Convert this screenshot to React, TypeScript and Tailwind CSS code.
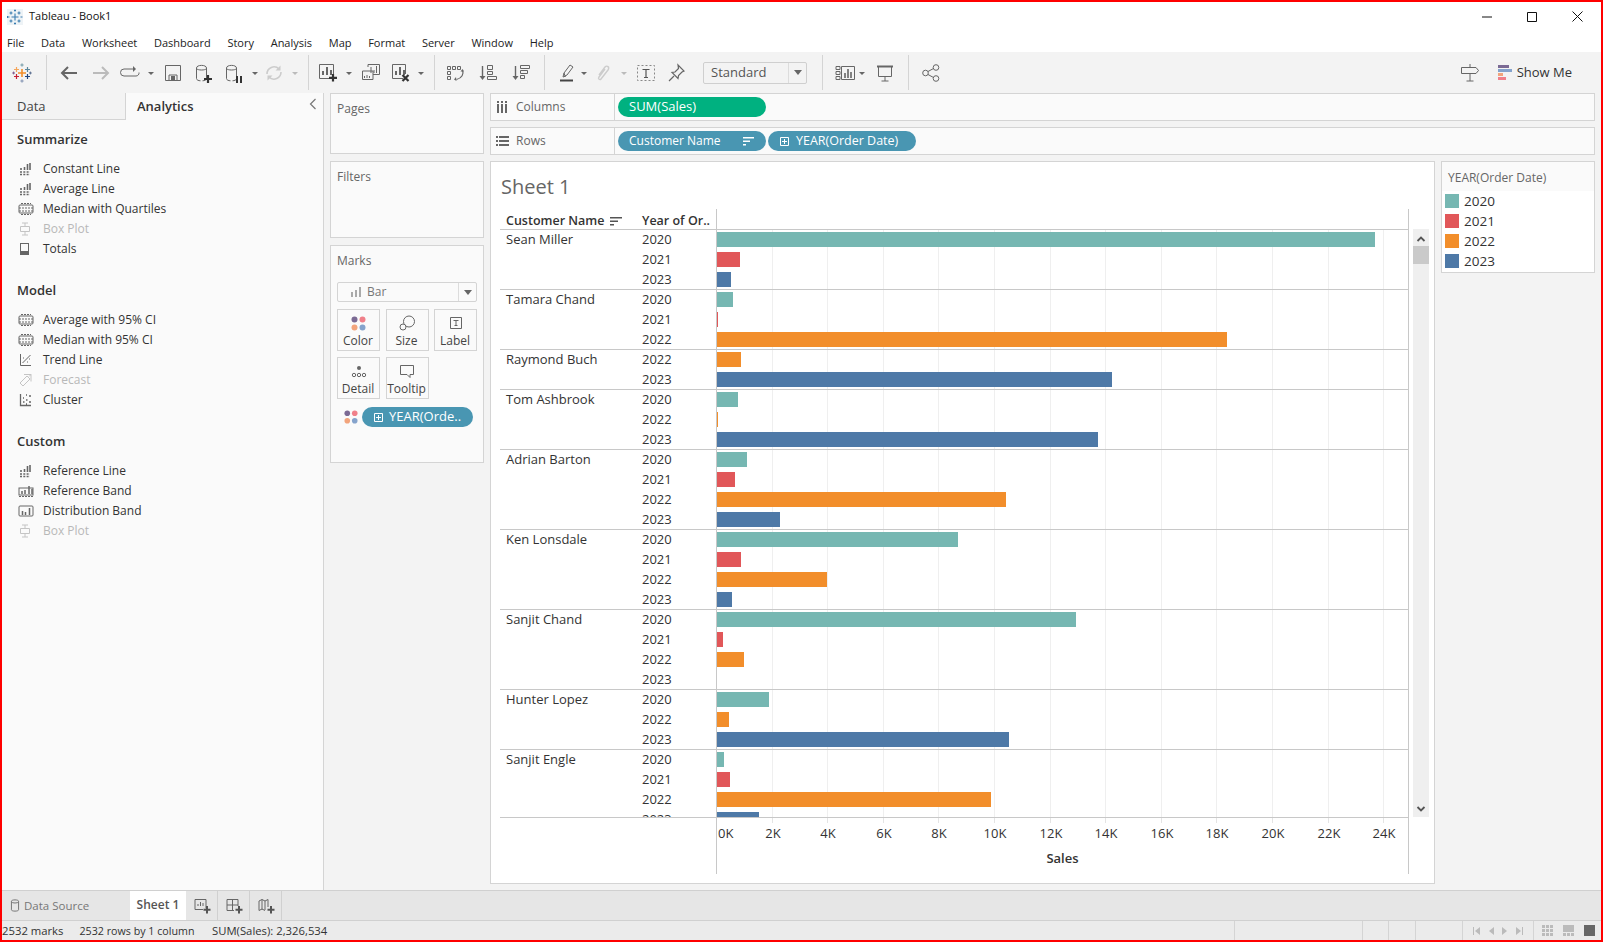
import React from "react";

const groups: { name: string; rows: [string, number][] }[] = [
  { name: "Sean Miller", rows: [["2020", 658], ["2021", 23], ["2023", 14]] },
  { name: "Tamara Chand", rows: [["2020", 16], ["2021", 1], ["2022", 510]] },
  { name: "Raymond Buch", rows: [["2022", 24], ["2023", 395]] },
  { name: "Tom Ashbrook", rows: [["2020", 21], ["2022", 1], ["2023", 381]] },
  { name: "Adrian Barton", rows: [["2020", 30], ["2021", 18], ["2022", 289], ["2023", 63]] },
  { name: "Ken Lonsdale", rows: [["2020", 241], ["2021", 24], ["2022", 110], ["2023", 15]] },
  { name: "Sanjit Chand", rows: [["2020", 359], ["2021", 6], ["2022", 27], ["2023", 0]] },
  { name: "Hunter Lopez", rows: [["2020", 52], ["2022", 12], ["2023", 292]] },
  { name: "Sanjit Engle", rows: [["2020", 7], ["2021", 13], ["2022", 274], ["2023", 42]] },
];

const yearColor: Record<string, string> = {
  "2020": "bg-[#76b7b2]",
  "2021": "bg-[#e15759]",
  "2022": "bg-[#f28e2b]",
  "2023": "bg-[#4e79a7]",
};

const ticks = [2, 4, 6, 8, 10, 12, 14, 16, 18, 20, 22, 24];
const tickX = (k: number) => Math.round(k * 27.8);

function Ico({ w = 20, h = 20, className = "", children }: { w?: number; h?: number; className?: string; children: React.ReactNode }) {
  return (
    <svg width={w} height={h} viewBox={`0 0 ${w} ${h}`} fill="none" stroke="#666" strokeWidth="1" className={"shrink-0 " + className}>
      {children}
    </svg>
  );
}

function Caret({ className = "", light }: { className?: string; light?: boolean }) {
  return (
    <svg width="6" height="20" viewBox="0 0 6 20" className={"shrink-0 " + className}>
      <path d="M0 9h6l-3 3z" fill={light ? "#bbb" : "#666"} />
    </svg>
  );
}

function Sep({ className = "" }: { className?: string }) {
  return <div className={"w-px h-[35px] bg-[#d4d4d4] shrink-0 " + className} />;
}

function TableauLogo({ size = 20 }: { size?: number }) {
  const cross = (x: number, y: number, r: number, c: string, sw = 1) => (
    <path d={`M${x - r} ${y}h${r * 2}M${x} ${y - r}v${r * 2}`} stroke={c} strokeWidth={sw} />
  );
  return (
    <svg width={size} height={size} viewBox="0 0 20 20" fill="none" className="shrink-0">
      {cross(10, 10, 4, "#f28e2b", 1.6)}
      {cross(4.5, 6.5, 2.5, "#f5a65b", 1.2)}
      {cross(15.5, 6.5, 2.5, "#5b879b", 1.2)}
      {cross(4.5, 13.5, 2.5, "#c72035", 1.2)}
      {cross(15.5, 13.5, 2.5, "#1f447e", 1.2)}
      {cross(10, 2, 1.6, "#7199a6", 1)}
      {cross(10, 18, 1.6, "#7e8fb0", 1)}
      {cross(1.6, 10, 1.4, "#7e5b8c", 1)}
      {cross(18.4, 10, 1.4, "#5b6f91", 1)}
    </svg>
  );
}

function AppIcon() {
  return (
    <svg width="16" height="16" viewBox="0 0 16 16" fill="none" stroke="#3a7cb0" strokeWidth="1.100" className="shrink-0">
      <rect x="0" y="0" width="16" height="16" fill="#eef3f6" stroke="none" />
      <path d="M8 4.500v7M4.500 8h7M4 2.500v3M2.500 4h3M12 2.500v3M10.500 4h3M4 10.500v3M2.500 12h3M12 10.500v3M10.500 12h3M8 .5v2M7 1.500h2M8 13.500v2M7 14.500h2M.5 7v2M13.500 8h2M.5 8h2" />
    </svg>
  );
}

function DbIcon({ stroke = "#666" }: { stroke?: string }) {
  return <path d="M2.500 5c0-3.500 10-3.500 10 0v10.500c0 1.500-2 2.200-4 2.300M2.500 5v10.500c0 1.500 2 2.200 4 2.300M2.500 5.500c1 2 9 2 10 0" stroke={stroke} />;
}

function BarsGlyph({ x = 4, y = 5 }: { x?: number; y?: number }) {
  return (
    <g fill="#666" stroke="none">
      <rect x={x} y={y + 5} width="2" height="4" />
      <rect x={x + 4} y={y + 1} width="2" height="8" />
      <rect x={x + 8} y={y + 4} width="2" height="5" />
    </g>
  );
}

function Toolbar() {
  return (
    <div className="h-[41px] bg-[#f3f3f3] flex items-center shrink-0">
      <div className="ml-[10px]"><TableauLogo /></div>
      <Sep className="ml-[14px]" />
      <Ico w={20} className="ml-[12px]"><path d="M18 10H3M9 4l-6 6 6 6" stroke="#666" strokeWidth="2" /></Ico>
      <Ico w={20} className="ml-[12px]"><path d="M2 10h15M11 4l6 6-6 6" stroke="#bbb" strokeWidth="2" /></Ico>
      <Ico w={20} className="ml-[9px]">
        <path d="M13 6H4a3 3 0 0 0 0 7h12a3 3 0 0 0 3-3.500" />
        <path d="M13 3l3 3-3 3z" fill="#666" stroke="none" />
      </Ico>
      <Caret className="ml-[8px]" />
      <Ico w={20} className="ml-[9px]">
        <path d="M2.500 2.500h15v15h-15zM6 17v-5h8v5" />
        <rect x="8" y="13" width="4" height="4" fill="#666" stroke="none" />
      </Ico>
      <Ico w={20} className="ml-[11px]">
        <DbIcon />
        <path d="M14 12v8M10 16h8" stroke="#333" strokeWidth="2.200" />
      </Ico>
      <Ico w={20} className="ml-[10px]">
        <DbIcon />
        <path d="M13 13v7M17 13v7" stroke="#333" strokeWidth="2" />
      </Ico>
      <Caret className="ml-[8px]" />
      <Ico w={20} className="ml-[6px]">
        <path d="M3 11a7 7 0 0 1 12-5M17 9a7 7 0 0 1-12 5" stroke="#ccc" strokeWidth="1.600" />
        <path d="M16.500 2.500v5h-5zM3.500 17.500v-5h5z" fill="#ccc" stroke="none" />
      </Ico>
      <Caret className="ml-[8px]" light />
      <Sep className="ml-[10px]" />
      <Ico w={20} className="ml-[9px]">
        <path d="M13 15.500H1.500v-14h14V11" />
        <BarsGlyph x={4} y={3} />
        <path d="M15 11v7.500M11 14.800h8" stroke="#333" strokeWidth="2.200" />
      </Ico>
      <Caret className="ml-[8px]" />
      <Ico w={20} className="ml-[9px]">
        <path d="M7 4V1.500h11.500v10H12M1.500 8H12v8.500H1.500z" />
        <path d="M10 4v6M13 7v3M15.500 3v7M3.500 13v2M6 12v3M8.500 13v2" stroke="#666" />
      </Ico>
      <Ico w={20} className="ml-[10px]">
        <path d="M12 15.500H1.500v-14h13V11" />
        <BarsGlyph x={4} y={3} />
        <path d="M11.500 12l6 6M17.500 12l-6 6" stroke="#333" strokeWidth="2.200" />
      </Ico>
      <Caret className="ml-[7px]" />
      <Sep className="ml-[10px]" />
      <Ico w={20} className="ml-[11px]">
        <path d="M1.500 3.500h3v3h-3zM6.500 3.500h3v3h-3zM11.500 3.500h3v3h-3zM1.500 8.500h3v3h-3zM1.500 13.500h3v3h-3z" />
        <path d="M16.500 7c1.500 4-.5 8-6 9.500" strokeWidth="1.200" />
        <path d="M10 14l-2 2.500 2.500 1.500zM16.500 6l-2 2.500h3.500z" fill="#666" stroke="none" />
      </Ico>
      <Ico w={20} className="ml-[12px]">
        <path d="M4.500 3v12" strokeWidth="1.400" />
        <path d="M1.500 13h6l-3 4z" fill="#666" stroke="none" />
        <path d="M9.500 2.500h5v4h-5zM9.500 8.500h5v3h-5zM9.500 13.500h9v3h-9z" />
      </Ico>
      <Ico w={20} className="ml-[13px]">
        <path d="M4.500 3v12" strokeWidth="1.400" />
        <path d="M1.500 13h6l-3 4z" fill="#666" stroke="none" />
        <path d="M9.500 2.500h9v3h-9zM9.500 7.500h7v3h-7zM9.500 12.500h4v3h-4z" />
      </Ico>
      <Sep className="ml-[13px]" />
      <Ico w={20} className="ml-[12px]">
        <path d="M8 13l-1-3 6-8 3 2-6 8zM7 10l-1 4 3-1" />
        <path d="M3 17.500h13" stroke="#444" strokeWidth="2" />
      </Ico>
      <Caret className="ml-[4px]" />
      <Ico w={20} className="ml-[7px]">
        <path d="M5 12l6-8c2-2 5 0 3 3l-7 9c-1 1.500-3.500 0-2-2l6-8" stroke="#ccc" strokeWidth="1.400" />
      </Ico>
      <Caret className="ml-[7px]" light />
      <Ico w={20} className="ml-[9px]">
        <path d="M1.500 2.500h17v15h-17z" strokeDasharray="2 2" stroke="#888" />
        <path d="M6.500 6.500h7M10 6.500v8M8 14.500h4" stroke="#555" strokeWidth="1.200" />
      </Ico>
      <Ico w={20} className="ml-[10px]">
        <path d="M12 2l6 6-2 1-3.500 3.500-.5 3-6-6 3-.5L12.500 5.500zM8 13l-5 5" strokeWidth="1.200" />
      </Ico>
      <div className="ml-[17px] w-[104px] h-[22px] border border-[#cfcfcf] rounded-[2px] flex items-center text-[13px] text-[#555] shrink-0">
        <span className="flex-1 pl-[7px]">Standard</span>
        <div className="w-[18px] h-full border-l border-[#dcdcdc] flex items-center justify-center">
          <svg width="8" height="5" viewBox="0 0 8 5"><path d="M0 0h8L4 5z" fill="#666" /></svg>
        </div>
      </div>
      <Sep className="ml-[15px]" />
      <Ico w={20} className="ml-[12px]">
        <path d="M1 3.500h4v3H1zM1 8.500h4v3H1zM1 13.500h4v3H1zM6.500 3.500h13v13h-13z" />
        <path d="M10 10v5M13 6v9M16 9v6" strokeWidth="1.600" />
      </Ico>
      <Caret className="ml-[4px]" />
      <Ico w={20} className="ml-[10px]">
        <path d="M2 3.500h16" strokeWidth="2" />
        <path d="M3.500 4v9.500h13V4M10 13.500v4.500M6.500 18h7" />
      </Ico>
      <Sep className="ml-[13px]" />
      <Ico w={20} className="ml-[12px]">
        <circle cx="15" cy="4.500" r="2.800" />
        <circle cx="15" cy="15.500" r="2.800" />
        <circle cx="4.500" cy="10" r="2.800" />
        <path d="M7 8.500l5.500-3M7 11.500l5.500 3" />
      </Ico>
      <div className="ml-auto flex items-center mr-[29px]">
        <Ico w={20}>
          <path d="M1.500 4.500H16l2.500 3-2.500 3H1.500zM10 1v3.500M10 10.500V18M6.500 18h7" />
        </Ico>
        <svg width="15" height="16" viewBox="0 0 15 16" className="ml-[18px] shrink-0">
          <rect x="0" y="0" width="11" height="3" fill="#7b6a94" />
          <rect x="0" y="4" width="14" height="3" fill="#85a3cc" />
          <rect x="0" y="8" width="5" height="3" fill="#f2a47c" />
          <rect x="0" y="12" width="8" height="3" fill="#f0808a" />
        </svg>
        <span className="ml-[4px] text-[13px] text-[#333]">Show Me</span>
      </div>
    </div>
  );
}

function RowIcon({ kind, off }: { kind: string; off?: boolean }) {
  const c = off ? "#c4c4c4" : "#666";
  return (
    <svg width="16" height="14" viewBox="0 0 16 14" fill="none" stroke={c} className="shrink-0">
      {kind === "line" && (
        <>
          <path d="M3 6v2M6.500 5v3M9.500 2v6M12 1v7" strokeWidth="1.600" />
          <path d="M2 10h10M2 12.500h10" strokeDasharray="2 1.300" strokeWidth="1.300" />
        </>
      )}
      {kind === "band" && (
        <>
          <rect x="1" y="3" width="14" height="8" rx="1" />
          <path d="M1 6h14M1 9h14" strokeDasharray="2 1" />
          <path d="M3 1.500h10M3 12.500h10" strokeDasharray="2 1" />
        </>
      )}
      {kind === "box" && <path d="M7 1v3M7 10v3M4 1h6M4 13h6M2.500 4.500h9v5h-9z" />}
      {kind === "total" && (
        <>
          <rect x="2.500" y="1.500" width="8" height="11" />
          <rect x="2.500" y="9" width="8" height="4" fill={c} stroke="none" />
        </>
      )}
      {kind === "trend" && (
        <path d="M2.500 1v11.500H13M4.500 10l8-8M5 5h1M9 9h1M11 6h1" />
      )}
      {kind === "forecast" && <path d="M6 1.500h7v7M13 1.500l-2 2M2 10l7-7 3 3-7 7z" />}
      {kind === "cluster" && (
        <path d="M2.500 1v11.500H13M5 9h1.500M5 5h1M8 7h1.500M11 3h2M11 9h2M8 2h1M8 11h1" strokeWidth="1.300" />
      )}
      {kind === "refband" && (
        <>
          <rect x="1" y="4" width="14" height="7" />
          <path d="M4 7v3M7 6v4M11 2v8M14 5v5" strokeWidth="1.500" />
          <path d="M1 12.500h14" strokeDasharray="2 1" />
        </>
      )}
      {kind === "dist" && (
        <>
          <rect x="1" y="2" width="14" height="10" rx="1" />
          <path d="M4.500 7v4M7.500 8v3M11.500 4v7" strokeWidth="1.500" />
        </>
      )}
    </svg>
  );
}

function AnalyticsGroup({ title, items, className = "" }: { title: string; items: [string, string, boolean?][]; className?: string }) {
  return (
    <div className={className}>
      <div className="pl-[15px] pt-[2px] h-5 flex items-center text-[13px] font-semibold text-[#333]">{title}</div>
      <div className="mt-[10px]">
        {items.map(([label, kind, off]) => (
          <div key={label + kind} className="h-5 flex items-center">
            <div className="w-[41px] pl-[16px] shrink-0"><RowIcon kind={kind} off={off} /></div>
            <span className={off ? "text-[#b8b8b8]" : "text-[#333]"}>{label}</span>
          </div>
        ))}
      </div>
    </div>
  );
}

function Sidebar() {
  return (
    <div className="w-[322px] bg-[#fafafa] border-r border-[#d4d4d4] shrink-0 flex flex-col">
      <div className="h-[27px] flex shrink-0 text-[13px]">
        <div className="w-[124px] bg-[#f3f3f3] border-r border-b border-[#d4d4d4] pl-[15px] pt-[2px] flex items-center text-[#444]">Data</div>
        <div className="flex-1 pl-[11px] flex items-center font-semibold text-[#333] relative">
          Analytics
          <svg width="8" height="12" viewBox="0 0 8 12" fill="none" stroke="#777" strokeWidth="1.200" className="absolute right-[6px] top-[5px]">
            <path d="M6.500 1l-5 5 5 5" />
          </svg>
        </div>
      </div>
      <AnalyticsGroup
        className="mt-[9px]"
        title="Summarize"
        items={[["Constant Line", "line"], ["Average Line", "line"], ["Median with Quartiles", "band"], ["Box Plot", "box", true], ["Totals", "total"]]}
      />
      <AnalyticsGroup
        className="mt-[21px]"
        title="Model"
        items={[["Average with 95% CI", "band"], ["Median with 95% CI", "band"], ["Trend Line", "trend"], ["Forecast", "forecast", true], ["Cluster", "cluster"]]}
      />
      <AnalyticsGroup
        className="mt-[21px]"
        title="Custom"
        items={[["Reference Line", "line"], ["Reference Band", "refband"], ["Distribution Band", "dist"], ["Box Plot", "box", true]]}
      />
    </div>
  );
}

function Dots({ size = 15 }: { size?: number }) {
  return (
    <svg width={size} height={size} viewBox="0 0 15 15" className="shrink-0">
      <circle cx="3.500" cy="3.500" r="3" fill="#7b6a94" />
      <circle cx="11.500" cy="3.500" r="3" fill="#f0808a" />
      <circle cx="3.500" cy="11.500" r="3" fill="#f2a47c" />
      <circle cx="11.500" cy="11.500" r="3" fill="#85a3cc" />
    </svg>
  );
}

function MarkButton({ label, children }: { label: string; children: React.ReactNode }) {
  return (
    <div className="h-[42px] border border-[#d4d4d4] bg-[#fafafa] flex flex-col items-center text-[#444] pt-[3px]">
      <div className="h-[20px] flex items-center">{children}</div>
      <span className="leading-[16px] -ml-[1px]">{label}</span>
    </div>
  );
}

function Plus() {
  return (
    <svg width="9" height="9" viewBox="0 0 9 9" fill="none" stroke="#fff" className="shrink-0">
      <path d="M.5.500h8v8h-8zM4.500 2v5M2 4.500h5" />
    </svg>
  );
}

function Pill({ className = "", children }: { className?: string; children: React.ReactNode }) {
  return <div className={"h-5 rounded-full flex items-center text-white shrink-0 " + className}>{children}</div>;
}

function CenterPanels() {
  return (
    <div className="w-[154px] ml-[6px] flex flex-col gap-[7px] shrink-0 text-[#666]">
      <div className="h-[61px] bg-[#fafafa] border border-[#d4d4d4] pl-[6px] pt-[6px]">Pages</div>
      <div className="h-[77px] bg-[#fafafa] border border-[#d4d4d4] pl-[6px] pt-[6px]">Filters</div>
      <div className="h-[218px] bg-[#fafafa] border border-[#d4d4d4] px-[6px] pt-[6px]">
        <div>Marks</div>
        <div className="mt-[12px] h-5 border border-[#d4d4d4] rounded-[2px] flex items-center">
          <svg width="12" height="10" viewBox="0 0 12 10" className="ml-[12px] shrink-0">
            <path d="M1 5h2v5H1zM5 3h2v7H5zM9 0h2v10H9z" fill="#aaa" />
          </svg>
          <span className="flex-1 pl-[5px] text-[#777]">Bar</span>
          <div className="w-[18px] h-full border-l border-[#dcdcdc] flex items-center justify-center">
            <svg width="8" height="5" viewBox="0 0 8 5"><path d="M0 0h8L4 5z" fill="#666" /></svg>
          </div>
        </div>
        <div className="mt-[7px] grid grid-cols-[43px_43px_43px] gap-x-[5.500px] gap-y-[6px]">
          <MarkButton label="Color"><Dots /></MarkButton>
          <MarkButton label="Size">
            <Ico w={16} h={16}>
              <circle cx="10" cy="6.500" r="5.500" />
              <circle cx="4" cy="12" r="3" fill="#fafafa" />
            </Ico>
          </MarkButton>
          <MarkButton label="Label">
            <Ico w={14} h={14}>
              <path d="M1.500 1.500h11v11h-11z" />
              <path d="M4.500 4.500h5M7 4.500v5M5.500 9.500h3" />
            </Ico>
          </MarkButton>
          <MarkButton label="Detail">
            <Ico w={16} h={14}>
              <circle cx="8" cy="4" r="2" fill="#666" stroke="none" />
              <circle cx="3" cy="11" r="1.700" />
              <circle cx="8" cy="11" r="1.700" />
              <circle cx="13" cy="11" r="1.700" />
            </Ico>
          </MarkButton>
          <MarkButton label="Tooltip">
            <Ico w={16} h={15}>
              <path d="M1.500 1.500h13v9H11v3l-3-3H1.500z" />
            </Ico>
          </MarkButton>
        </div>
        <div className="mt-[8px] flex items-center pl-[7px]">
          <Dots size={14} />
          <Pill className="ml-[4px] w-[111px] bg-[#4996b2] pl-[12px] gap-[6px] text-[13px]"><Plus />YEAR(Orde..</Pill>
        </div>
      </div>
    </div>
  );
}

function Shelf({ icon, label, children }: { icon: React.ReactNode; label: string; children: React.ReactNode }) {
  return (
    <div className="h-[28px] bg-[#fafafa] border border-[#d4d4d4] flex items-center shrink-0">
      <div className="w-[124px] h-full border-r border-[#d4d4d4] flex items-center pl-[5px] text-[#666] shrink-0">
        <div className="w-[20px] shrink-0">{icon}</div>
        <span>{label}</span>
      </div>
      <div className="pl-[3px] flex gap-[2px] items-center">{children}</div>
    </div>
  );
}

function Viz() {
  return (
    <div className="flex-1 bg-white border border-[#d4d4d4] pl-[9px] flex min-w-0">
      <div className="w-[909px] shrink-0 flex flex-col">
        <div className="h-[47px] shrink-0 pl-[1px] pt-[11px] text-[20px] leading-[28px] text-[#666]">Sheet 1</div>
        <div className="h-5 shrink-0 flex text-[#333] border-r border-[#c8c8c8] text-[12.500px]">
          <div className="w-[133px] pl-[6px] pt-[4px] flex items-center font-semibold">
            Customer Name
            <svg width="12" height="9" viewBox="0 0 12 9" className="ml-[6px]"><path d="M0 0h12v1.500H0zM0 3.500h8V5H0zM0 7h4v1.500H0z" fill="#555" /></svg>
          </div>
          <div className="w-[83px] pl-[9px] pt-[4px] flex items-center font-semibold">Year of Or..</div>
          <div className="flex-1 border-l border-[#c8c8c8]" />
        </div>
        <div className="h-[588px] shrink-0 overflow-hidden relative border-r border-[#c8c8c8]">
          {ticks.map((k) => (
            <div key={k} className="absolute top-0 bottom-0 w-px bg-[#efefef]" style={{ left: 216 + tickX(k) }} />
          ))}
          {groups.map((g) => (
            <div key={g.name} className="relative shadow-[inset_0_1px_0_#c8c8c8] text-[#333] text-[13px]">
              {g.rows.map(([year, w], i) => (
                <div key={year} className="h-5 flex">
                  <div className="w-[133px] pl-[6px] pt-[2px] flex items-center shrink-0">{i === 0 ? g.name : ""}</div>
                  <div className="w-[83px] pl-[9px] pt-[2px] flex items-center shrink-0">{year}</div>
                  <div className="flex-1 border-l border-[#c8c8c8] pt-[3px]">
                    <div className={"h-[15px] " + yearColor[year]} style={{ width: w }} />
                  </div>
                </div>
              ))}
            </div>
          ))}
        </div>
        <div className="h-[57px] shrink-0 flex border-t border-r border-[#c8c8c8] relative text-[#333] text-[13px]">
          <div className="w-[216px] shrink-0" />
          <div className="flex-1 border-l border-[#c8c8c8] relative">
            {ticks.map((k) => (
              <div key={k} className="absolute top-0 h-[5px] w-px bg-[#e4e4e4]" style={{ left: tickX(k) - 1 }} />
            ))}
            <span className="absolute top-[6px] left-[1px]">0K</span>
            {ticks.map((k) => (
              <span key={k} className="absolute top-[6px] -translate-x-1/2" style={{ left: tickX(k) }}>{k}K</span>
            ))}
            <div className="absolute top-[31px] inset-x-0 text-center font-semibold">Sales</div>
          </div>
        </div>
      </div>
      <div className="w-4 ml-1 mt-[67px] h-[588px] bg-[#efefef] flex flex-col items-center shrink-0">
        <svg width="10" height="17" viewBox="0 0 10 17" fill="none" stroke="#555" strokeWidth="1.800" className="shrink-0">
          <path d="M1.500 12l3.500-3.500L8.500 12" />
        </svg>
        <div className="w-full h-[18px] bg-[#cacaca]" />
        <svg width="10" height="10" viewBox="0 0 10 10" fill="none" stroke="#555" strokeWidth="1.800" className="mt-auto mb-[3px] shrink-0">
          <path d="M1.500 3l3.500 3.500L8.500 3" />
        </svg>
      </div>
    </div>
  );
}

function Legend() {
  return (
    <div className="w-[154px] h-[112px] ml-[6px] bg-white border border-[#d4d4d4] shrink-0">
      <div className="h-[29px] bg-[#fafafa] pl-[6px] pt-[2px] flex items-center text-[#666]">YEAR(Order Date)</div>
      <div className="pl-[3px]">
        {Object.keys(yearColor).map((y) => (
          <div key={y} className="h-5 flex items-center text-[#333] text-[13.500px]">
            <div className={"w-[14px] h-[14px] " + yearColor[y]} />
            <span className="ml-[5px]">{y}</span>
          </div>
        ))}
      </div>
    </div>
  );
}

function BottomBars() {
  return (
    <>
      <div className="h-[30px] bg-[#e6e6e6] border-t border-[#d0d0d0] flex shrink-0">
        <div className="w-[128px] pl-[8px] flex items-center gap-[4px] text-[#777] text-[11.500px]">
          <svg width="10" height="13" viewBox="0 0 14 18" fill="none" stroke="#777" strokeWidth="1.400"><path d="M2 3c0-2.500 10-2.500 10 0v12c0 2.500-10 2.500-10 0zM2 4c1 2 9 2 10 0" /></svg>
          Data Source
        </div>
        <div className="w-[56px] bg-white flex items-center justify-center pb-[2px] font-semibold text-[#555]">Sheet 1</div>
        {["sheet", "dash", "story"].map((k) => (
          <div key={k} className="w-[32px] border-r border-[#d0d0d0] flex items-center justify-center first:border-l">
            <Ico w={20} h={18}>
              {k === "sheet" && <path d="M14 11.500V2.500H3v10h8M6 9V7M8.500 9V5M11 9V6" />}
              {k === "dash" && <path d="M14 9V2.500H3v11h7M8.500 2.500v11M3 8h11" />}
              {k === "story" && <path d="M12 10V2.500l-3 1.500-3-1.500-3 1.500v9.500l3-1.500 3 1.500M6 2.500v10M9 4v9" />}
              <path d="M15 9v7.500M11.500 12.700h7" stroke="#555" strokeWidth="2" />
            </Ico>
          </div>
        ))}
      </div>
      <div className="h-5 bg-[#ebebeb] border-t border-[#d0d0d0] flex items-center text-[#333] shrink-0 text-[11.300px]">
        <span className="w-[77.500px] pt-[2px]">2532 marks</span>
        <span className="w-[132.500px] pt-[2px] text-[10.700px]">2532 rows by 1 column</span>
        <span className="w-[1022px] pt-[2px]">SUM(Sales): 2,326,534</span>
        <div className="w-[128px] h-full border-l border-[#d4d4d4]" />
        <div className="w-[26px] h-full border-l border-[#d4d4d4]" />
        <div className="w-[27px] h-full border-l border-[#d4d4d4]" />
        <div className="w-[47px] h-full border-l border-[#d4d4d4]" />
        <div className="w-[71px] h-full border-l border-[#d4d4d4] flex items-center justify-around px-[6px]">
          <svg width="7" height="8" viewBox="0 0 7 8"><path d="M0 0h1v8H0zM7 0v8L2 4z" fill="#bbb" /></svg>
          <svg width="5" height="8" viewBox="0 0 5 8"><path d="M5 0v8L0 4z" fill="#bbb" /></svg>
          <svg width="5" height="8" viewBox="0 0 5 8"><path d="M0 0v8l5-4z" fill="#bbb" /></svg>
          <svg width="7" height="8" viewBox="0 0 7 8"><path d="M6 0h1v8H6zM0 0v8l5-4z" fill="#bbb" /></svg>
        </div>
        <div className="flex-1 h-full border-l border-[#d4d4d4] flex items-center pl-[8px] gap-[10px]">
          <svg width="11" height="11" viewBox="0 0 11 11" fill="#bbb"><path d="M0 0h3v3H0zM4 0h3v3H4zM8 0h3v3H8zM0 4h3v3H0zM4 4h3v3H4zM8 4h3v3H8zM0 8h3v3H0zM4 8h3v3H4zM8 8h3v3H8z" /></svg>
          <svg width="11" height="11" viewBox="0 0 11 11" fill="#bbb"><path d="M0 0h11v7H0zM0 8h3v3H0zM4 8h3v3H4zM8 8h3v3H8z" /></svg>
          <div className="w-[11px] h-[11px] bg-[#666]" />
        </div>
      </div>
    </>
  );
}

export default function App() {
  return (
    <div className="w-[1603px] h-[942px] border-2 border-[#ff0000] flex flex-col overflow-hidden bg-[#f3f3f3] font-['Open_Sans',sans-serif] text-[12px]">
      <div className="h-[50px] bg-white shrink-0 flex flex-col">
        <div className="h-[29px] flex items-center pl-[5px] pr-[18px] shrink-0">
          <AppIcon />
          <span className="ml-[6px] text-[11px] text-[#111]">Tableau - Book1</span>
          <div className="ml-auto flex items-center">
            <svg width="10" height="2" viewBox="0 0 10 2"><path d="M0 1h10" stroke="#111" /></svg>
            <svg width="10" height="10" viewBox="0 0 10 10" fill="none" stroke="#111" className="ml-[35px]"><path d="M.5.500h9v9h-9z" /></svg>
            <svg width="11" height="11" viewBox="0 0 11 11" fill="none" stroke="#111" className="ml-[35px]"><path d="M.5.500l10 10M10.500.500l-10 10" /></svg>
          </div>
        </div>
        <div className="flex-1 flex items-center pl-[5px] pt-[3px] gap-[16.700px] text-[#222] text-[11px]">
          {["File", "Data", "Worksheet", "Dashboard", "Story", "Analysis", "Map", "Format", "Server", "Window", "Help"].map((m) => (
            <span key={m}>{m}</span>
          ))}
        </div>
      </div>
      <Toolbar />
      <div className="flex-1 flex min-h-0">
        <Sidebar />
        <CenterPanels />
        <div className="ml-[6px] flex-1 flex flex-col gap-[6px] pr-[6px] pb-[6px] min-w-0">
          <Shelf
            label="Columns"
            icon={<svg width="12" height="12" viewBox="0 0 12 12" fill="#666"><path d="M1 3h2v9H1zM5 3h2v9H5zM9 3h2v9H9zM1 0h2v2H1zM5 0h2v2H5zM9 0h2v2H9z" /></svg>}
          >
            <Pill className="w-[148px] bg-[#00b180] pl-[11px] text-[13px]">SUM(Sales)</Pill>
          </Shelf>
          <Shelf
            label="Rows"
            icon={<svg width="13" height="10" viewBox="0 0 13 10" fill="#666"><path d="M0 0h2v2H0zM0 4h2v2H0zM0 8h2v2H0zM3 0h10v2H3zM3 4h10v2H3zM3 8h10v2H3z" /></svg>}
          >
            <Pill className="w-[148px] bg-[#4996b2] pl-[11px] pr-[11px] justify-between text-[12px]">
              Customer Name
              <svg width="12" height="9" viewBox="0 0 12 9"><path d="M0 0h11v1.500H0zM0 3.500h7V5H0zM0 7h3v1.500H0z" fill="#fff" /></svg>
            </Pill>
            <Pill className="w-[148px] bg-[#4996b2] pl-[12px] gap-[7px] text-[12.500px]"><Plus />YEAR(Order Date)</Pill>
          </Shelf>
          <div className="flex-1 flex min-h-0">
            <Viz />
            <Legend />
          </div>
        </div>
      </div>
      <BottomBars />
    </div>
  );
}
